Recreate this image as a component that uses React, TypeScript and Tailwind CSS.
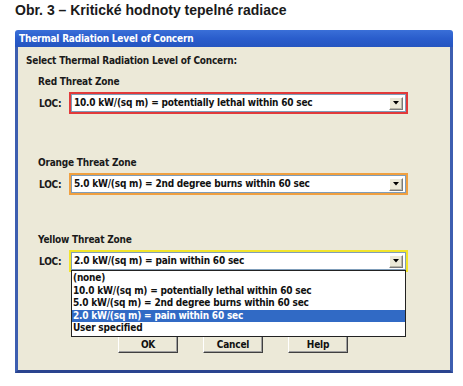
import type { ReactNode } from "react";

const narrow = "font-['Liberation_Sans_Narrow','Arial_Narrow','DejaVu_Sans_Condensed',sans-serif] tracking-[-0.2px]";

function DropArrow() {
  return (
    <div className="flex h-[13px] w-[14px] items-center justify-center border border-t-white border-l-white border-r-[#7a7a7a] border-b-[#7a7a7a] bg-[#ece9d8] shadow-[inset_-1px_-1px_0_#b8b5a6]">
      <svg width="6" height="4" viewBox="0 0 6 4">
        <path d="M0 0H6L3 3.5Z" fill="#000" />
      </svg>
    </div>
  );
}

function Select({ ring, value, children }: { ring: string; value: string; children?: ReactNode }) {
  return (
    <div className={`relative h-[22px] w-[339px] border-[2px] ${ring}`}>
      <div className="flex h-full items-center border border-[#7f9db9] bg-white pl-[2px] pr-[2px]">
        <span className={`flex-1 text-[10px] font-bold leading-none text-[#111] ${narrow}`}>{value}</span>
        <DropArrow />
      </div>
      {children}
    </div>
  );
}

function Zone({ label, ring, value, children }: { label: string; ring: string; value: string; children?: ReactNode }) {
  return (
    <div className="flex flex-col">
      <div className={`h-[14px] pl-[20px] text-[10px] font-bold leading-[14px] text-[#1a1a1a] ${narrow}`}>{label}</div>
      <div className="mt-[3px] flex items-center">
        <span className={`w-[51px] pl-[21px] text-[10px] font-bold text-[#1a1a1a] ${narrow}`}>LOC:</span>
        <Select ring={ring} value={value}>
          {children}
        </Select>
      </div>
    </div>
  );
}

const options = [
  "(none)",
  "10.0 kW/(sq m) = potentially lethal within 60 sec",
  "5.0 kW/(sq m) = 2nd degree burns within 60 sec",
  "2.0 kW/(sq m) = pain within 60 sec",
  "User specified",
];

function Button({ label }: { label: string }) {
  return (
    <button className="flex h-[17px] w-[60px] items-center justify-center border border-t-white border-l-white border-r-[#404040] border-b-[#404040] bg-[#ece9d8] shadow-[inset_-1px_-1px_0_#a0a0a0]">
      <span className={`text-[10px] font-bold leading-none text-[#111] ${narrow}`}>{label}</span>
    </button>
  );
}

export default function App() {
  return (
    <div className="h-[386px] w-[463px] bg-white">
      <div className="pl-[15px] pt-[2px] font-['Liberation_Sans',Arial,sans-serif] text-[14px] font-bold leading-[16px] text-[#1a1a1a]">
        Obr. 3 – Kritické hodnoty tepelné radiace
      </div>

      <div className="ml-[15px] mt-[12px] flex h-[343px] w-[438px] flex-col">
        {/* title bar */}
        <div className="flex h-[17px] items-center rounded-t-[3px] bg-gradient-to-b from-[#3a6fd8] via-[#2a5dcc] to-[#2555c0] pl-[4px]">
          <span className={`text-[10px] font-bold text-white ${narrow}`}>Thermal Radiation Level of Concern</span>
        </div>

        {/* body */}
        <div className="flex flex-1 flex-col border-x-[3px] border-b-[3px] border-x-[#3d5eb0] border-b-[#2a448f] bg-[#ece9d8]">
          <div className={`mt-[7px] h-[14px] pl-[8px] text-[10px] font-bold leading-[14px] text-[#1a1a1a] ${narrow}`}>
            Select Thermal Radiation Level of Concern:
          </div>

          <div className="mt-[7px]">
            <Zone label="Red Threat Zone" ring="border-[#e23a3a]" value="10.0 kW/(sq m) = potentially lethal within 60 sec" />
          </div>

          <div className="mt-[42px]">
            <Zone label="Orange Threat Zone" ring="border-[#f0a040]" value="5.0 kW/(sq m) = 2nd degree burns within 60 sec" />
          </div>

          <div className="mt-[38px]">
            <Zone label="Yellow Threat Zone" ring="border-[#f2e52a]" value="2.0 kW/(sq m) = pain within 60 sec">
              <div className="absolute left-0 top-[18px] z-10 flex w-[335px] flex-col border border-[#222] bg-white py-[1px]">
                {options.map((o, i) => (
                  <div
                    key={o}
                    className={`h-[12.5px] pl-[1px] text-[10px] font-bold leading-[12.5px] ${narrow} ${
                      i === 3 ? "bg-[#316ac5] text-white" : "text-[#111]"
                    }`}
                  >
                    {o}
                  </div>
                ))}
              </div>
            </Zone>
          </div>

          <div className="mt-[64px] flex gap-[25px] pl-[100px]">
            <Button label="OK" />
            <Button label="Cancel" />
            <Button label="Help" />
          </div>
        </div>
      </div>
    </div>
  );
}
